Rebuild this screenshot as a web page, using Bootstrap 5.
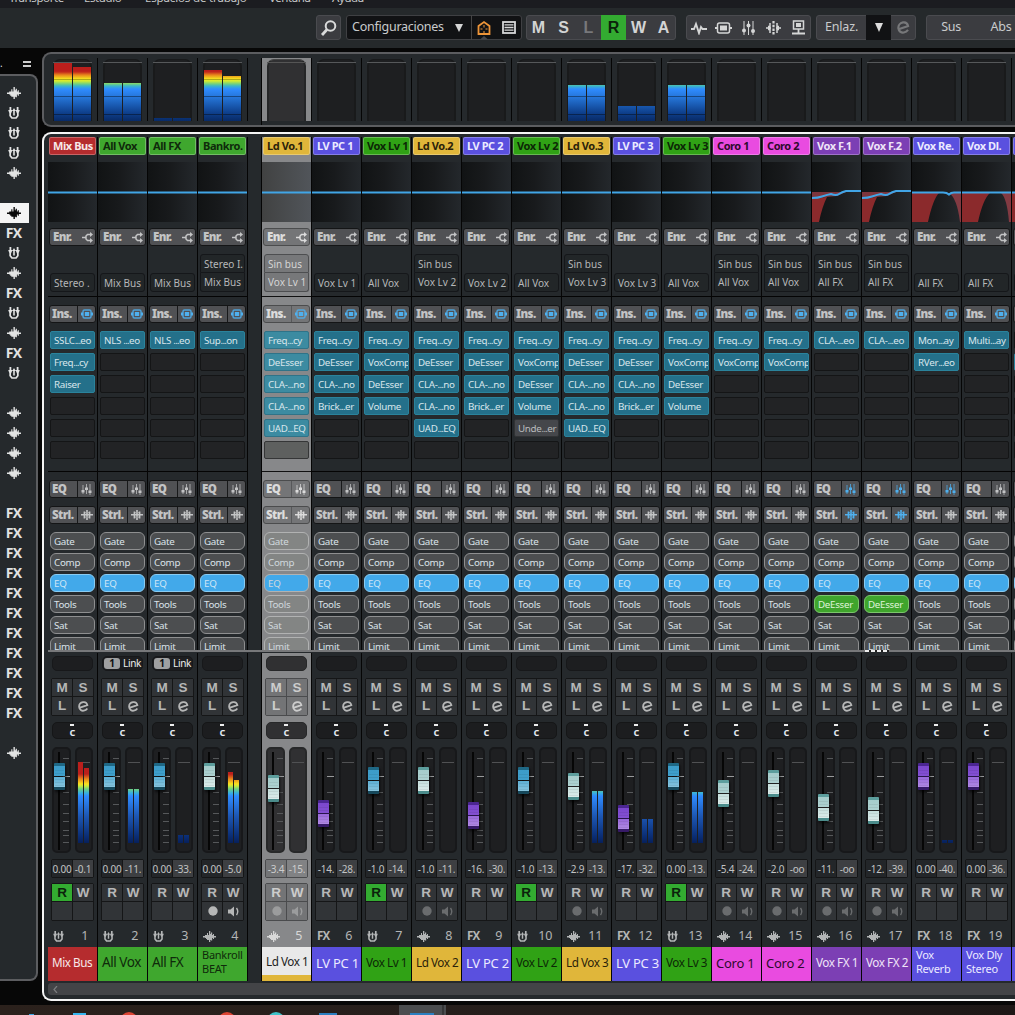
<!DOCTYPE html>
<html lang="es">
<head>
<meta charset="utf-8">
<title>MixConsole</title>
<link href="https://cdn.jsdelivr.net/npm/bootstrap@5.3.0/dist/css/bootstrap.min.css" rel="stylesheet">
<script src="https://cdn.jsdelivr.net/npm/bootstrap@5.3.0/dist/js/bootstrap.bundle.min.js"></script>
<style>
body{width:1015px;height:1015px;overflow:hidden;background:#070707;font-family:"Noto Sans","Open Sans",sans-serif;color:#c9cbcc;font-size:10px;line-height:1;white-space:nowrap}
svg{display:block;flex:none}
.menubar{height:8px;background:#1b1c20;font-size:11.5px;letter-spacing:-.4px;padding-left:9px;color:#c6c7c8}
.menubar span{line-height:16px;margin-top:-10px;flex:none}
.toolbar{height:40px;background:#25292b;padding:7px 0 0 316px;gap:5px}
.tgroup{height:25px;background:#3b3c40;border:1px solid #4a4b4f;border-radius:3px;flex:none}
.tcell{width:25px;height:25px;margin-top:-1px;display:flex;align-items:center;justify-content:center;flex:none}
.tlet .tcell{font:bold 16px "Liberation Sans",sans-serif;color:#d3d4d4}
.tlet .tcell:first-child{margin-left:-1px}
.ticons .tcell:first-child{margin-left:-1px}
.tlet .dim{color:#77787b}
.tlet .on{background:#33ab31;color:#0b230c}
.conf{width:176px;background:#111214;border-color:#3f4043;font-size:12.5px;letter-spacing:-.25px}
.side{width:42px;height:953px}
.sidehead{height:26px;color:#ddd}
.sidebox{width:38px;height:907px;background:#25292c;border:2px solid #5c5d60;border-left:0;border-radius:0 8px 8px 0;padding-top:7px}
.sidebox .si{height:20px;width:29px;display:flex;align-items:center;justify-content:center;color:#e2e3e3;padding-right:2px}
.sidebox .si.cur{background:#f4f4f4;color:#0a0a0a}
.fxt{font:bold 14px/14px "Open Sans","Noto Sans",sans-serif;letter-spacing:-.8px}
.main{width:973px}
.over{height:75px;margin-top:4px;border:2px solid #5c5d60;border-right:0;border-radius:9px 0 0 9px;background:#25292c;padding:4px 0 0 4px}
.ocol{width:50px;height:63px;border-right:1px solid #050505;flex:none;padding-top:1px}
.ocol .slot{width:39px;height:62px;margin-left:5px;background:#1e1f21;border:solid #191a1b;border-width:1px 2px 0;border-radius:7px 7px 0 0;position:relative}
.ocol .slot:before{content:"";position:absolute;left:-2px;right:-2px;top:2px;height:1px;background:#56585a}
.ocol .pair{position:absolute;left:-1px;bottom:0;display:flex;gap:1px;align-items:flex-end}
.ocol i{display:block;width:18px;background:linear-gradient(transparent 16px,#0004 16px 17px,transparent 17px 33px,#0006 33px 34px,transparent 34px 51px,#0006 51px 52px,transparent 52px) bottom/100% 58px no-repeat,linear-gradient(#bb1f1c 8px,#c32a1c 9px,#e8871c 12px,#f5e61e 16px,#d3ec30 18px,#6fcf80 21px,#3cb5c8 23px,#2f8cff 26px,#2370d0 36px,#0e3f8b 50px,#082a66 58px) bottom/100% 58px no-repeat}
.ocol.sel{background:#87888a}.ocol.sel .slot{background:#303032;border-color:#252627;border-top-color:#444}.ocol.sel .slot:before{background:#555}
.gapcol{width:14px;flex:none;border-right:1px solid #050505}
.rack{height:869px;margin-top:5px;border:2px solid #f5f5f5;border-right:0;border-radius:9px 0 0 9px;background:#25292c;padding:3px 0 0 4px}
.chn{width:50px;border-right:1px solid #050505;flex:none;display:flex;flex-direction:column}
.up{height:513px;overflow:hidden}
.lo{height:328px}
.tag{height:18px;margin:0 1px 7px;border:1px solid #fff4;border-radius:2px;padding-left:3px;font:bold 11px/16px "Noto Sans",sans-serif;letter-spacing:-.42px;overflow:hidden;flex:none}
.btnrow{height:18px;margin:0 1px 8px;border:1px solid #141516;border-radius:3px;background:#505154;color:#c3c4c5;display:flex;align-items:center;font:bold 11.5px/16px "Noto Sans",sans-serif;letter-spacing:-.6px;flex:none}
.btnrow b{width:28px;padding-left:2px;height:16px;border-right:1px solid #18191a}
.btnrow.w b{border:0;width:29px;padding-left:3px}
.btnrow svg{margin:0 auto}
.blue{color:#4fb0ee}
.routes{height:38px;margin:0 2px 4px;display:flex;flex-direction:column;justify-content:flex-end;flex:none}
.routes span{height:19px;border:1px solid #15171a;border-radius:3px;background:#222628;line-height:18px;padding-left:3px;font-size:10px;letter-spacing:0;color:#b6b8b9;overflow:hidden}
.routes span+span{border-top:0;border-radius:0 0 3px 3px}
.routes.two span:first-child{border-radius:3px 3px 0 0}
.sepl{height:1px;background:#040404;margin-bottom:8px;flex:none}
.insl{gap:4px;margin:0 2px 12px;display:flex;flex-direction:column;flex:none}
.insl span{height:18px;border:1px solid #141516;border-radius:2px;background:#222325;padding-left:3px;line-height:17px;font-size:9.8px;letter-spacing:-.3px;color:#d8e6ec;overflow:hidden}
.insl u{text-decoration:none;letter-spacing:-.75px}
.insl .fx{background:#24708a;border-color:#2a839c}
.insl .off{background:#45474b;border-color:#303234;color:#b9bbbd}
.mods{gap:3px;margin:0 2px;display:flex;flex-direction:column}
.mods span{height:18px;border:1px solid #8e8f90;border-radius:6px;background:#4c4e50;padding-left:3px;line-height:17px;font-size:9.8px;letter-spacing:-.3px;color:#dbe3ea;flex:none}
.mods .eq{background:#42a9ea;border-color:#8accf2;color:#cfe6f6}
.mods .de{background:#3fa52c;border-color:#7cc76c;color:#dff3d9}
.linkb{height:15px;margin:3px 4px 7px;border:1px solid #17181a;border-radius:5px;background:#1d1e20;color:#eee;font:10px/13px "Noto Sans",sans-serif;display:flex;align-items:center;flex:none;letter-spacing:-.3px}
.linkb b{width:16px;height:11px;line-height:11px;background:#9fa0a1;border-radius:3px;color:#111;text-align:center;margin:0 3px 0 1px}
.quad{height:38px;margin:0 3px;border:1px solid #151617;border-radius:2px;background:#151617;display:grid;grid-template-columns:20px 20px;grid-template-rows:17px 18px;gap:1px;flex:none}
.quad>*{background:#313437;display:flex;align-items:center;justify-content:center;font:bold 13.5px/1 "Liberation Sans",sans-serif;color:#b6b7b7}
.quad svg{margin-left:1px}
.quad .ron{background:#33ab31;color:#0b230c}
.quad .dm{color:#6a6c6e}
.panb{height:17px;margin:6px 4px 8px;border:1px solid #151617;border-radius:5px;background:#1c1d1f;display:flex;flex-direction:column;align-items:center;color:#e4eaf0;font:600 11.5px/12px "Noto Sans",sans-serif;flex:none}
.panb i{width:4px;height:2px;background:#eee;margin-top:1px;flex:none;margin-right:1px}
.panb em{font-style:normal;margin-top:1px;line-height:10px}
.fz{height:106px;margin:0 4px;display:flex;gap:4px;flex:none}
.fz>div{width:19px;height:106px;border:2px solid #17181a;border-radius:5px;background:#1e1f21;position:relative}
.fz .mt{width:18px}
.fz .mt:before{content:"";position:absolute;left:1px;right:1px;top:13px;height:1px;background:#505153}
.fz .mp{position:absolute;left:1px;bottom:8px;display:flex;gap:1px;align-items:flex-end}
.fz .mp i{width:5px;background:linear-gradient(#bb1f1c 12px,#e8871c 17px,#f9e31e 22px,#c6ea40 24px,#6fd080 27px,#38b0dd 31px,#2f8bff 34px,#1d57b4 54px,#0a2c72 75px,#07205a 81px) bottom/100% 81px no-repeat}
.knob{position:absolute;left:0;width:11px;height:27px;border-radius:1px;box-shadow:1px 2px 3px #000a}
.kb{background:linear-gradient(#1f6885 3px,#3c9cc9 3px,#3f9fcb 13px,#111c 13px,#111c 14px,#5eb0d5 14px,#86c4de 24px,#16485b 24px)}
.kw{background:linear-gradient(#5d9e9d 3px,#a5cccb 3px,#add1d0 13px,#222 13px,#222 14px,#c5dfdd 14px,#dcecea 24px,#4b8c8b 24px)}
.kp{background:linear-gradient(#4b2692 3px,#7b47cd 3px,#8350d2 13px,#2a1550 13px,#2a1550 14px,#9868da 14px,#b18ae4 24px,#371a68 24px)}
.knob:after{content:"";position:absolute;inset:5px 1px 4px;background:repeating-linear-gradient(#0000 0 2px,#0001 2px 3px)}
.vals{height:19px;margin:6px 3px 5px;border:1px solid #151617;border-radius:2px;background:#151617;display:grid;grid-template-columns:20px 20px;gap:1px;flex:none;font-size:10px;line-height:18px;letter-spacing:-.25px;color:#c2c3c3}
.vals span{background:#232629;text-align:center;overflow:hidden}
.vals span+span{background:#3d3f42}
.numr{height:26px;padding:4px 9px 0 5px;display:flex;align-items:center;justify-content:space-between;flex:none;font-size:12.5px;letter-spacing:-.3px;color:#b3b5b6}
.numr .fxt{font-size:11.5px;letter-spacing:-.9px}
.nm{height:34px;padding:0 0 2px 4px;display:flex;align-items:center;overflow:hidden;flex:none;font-size:11.7px;letter-spacing:-.45px}
.nm.big{font-size:13.5px;letter-spacing:-.45px}.nm.med{font-size:13px;letter-spacing:-.25px}
.nm.two{font-size:11px;line-height:14px;padding-bottom:4px;letter-spacing:-.25px}
.sel{background:#87888a}
.sel .sepl{background:#111}
.sel .btnrow{background:#747577;border-color:#4b4c4d;color:#dcdcdc}.sel .btnrow b{border-color:#57585a}
.sel .routes span{background:#77787a;border-color:#4d4e50;color:#d5d5d5}
.sel .insl span{background:#5e605f;border-color:#353637}.sel .insl .fx{background:#3c8ba1;border-color:#2f7388}
.sel .mods span{background:#838584;border-color:#b1b2b2;color:#d0d8dd}.sel .mods .eq{background:#42a9ea}
.sel .linkb,.sel .panb,.sel .fz>div{background:#303032;border-color:#272829}
.sel .quad,.sel .vals{background:#4a4b4d;border-color:#4a4b4d}.sel .quad>*,.sel .vals span{background:#737476;color:#ccc}
.sel .quad .dm{color:#9b9c9d}.sel .vals span+span{background:#818284}
.sel .numr{color:#d8d8d8}
.sel .nm{background:#e9e9e9!important;color:#222!important;border-bottom:6px solid #e0b63a;height:34px;padding-bottom:0;padding-top:2px}
.split{height:3px;background:linear-gradient(#77787a 2px,#25292c 2px)}
.grip{width:24px;height:2px;margin-left:817px;background:repeating-linear-gradient(90deg,#eee 0 4px,#222 4px 6px)}
.sbar{height:12px;margin-top:2px;background:#434447;border-radius:3px 0 0 3px;color:#777;padding:3px 0 0 5px}
.task{height:10px;margin-top:4px;background:linear-gradient(90deg,#2b211c,#241d1b 60%,#1d1716)}
</style>
</head>
<body>
<svg width="0" height="0" style="position:absolute">
<defs>
<linearGradient id="gd"><stop offset="0" stop-color="#111314"/><stop offset=".45" stop-color="#181a1c"/><stop offset="1" stop-color="#24282c"/></linearGradient>
<linearGradient id="gs"><stop offset="0" stop-color="#414242"/><stop offset="1" stop-color="#51555a"/></linearGradient>
<symbol id="wave" viewBox="0 0 13 11"><path fill="currentColor" d="M0 5h13v1.500H0zM2 4h1v3H2zM3 4h1v4H3zM4 2h1v7H4zM5 4h1v5H5zM6 0h1.300v11H6zM7 3h1v6H7zM8 1.500h1.200v8H8zM9 4h1v3H9zM10 3h1v5h-1z"/></symbol>
<symbol id="trk" viewBox="0 0 12 12"><path fill="currentColor" d="M1.500 0h1.800v3h1.200L3 6.500v2L4.500 10.200h3L9 8.500v-2L7.500 3h1.200V0h1.800v3h1.300L10.700 6v3l-2.200 2.700h-5L1.300 9V6L.2 3h1.300zM6 1l1.800 3H6.800v4.500H5.200V4h-1z"/></symbol>
<symbol id="rt" viewBox="0 0 11 11"><path fill="none" stroke="currentColor" stroke-width="1.500" d="M0 5.500h4M9 2.500H5.500L4 4v3l1.500 1.500H9"/><path fill="currentColor" d="M8 0l3 2.500-3 2.500zM8 6l3 2.500-3 2.500z"/></symbol>
<symbol id="ins" viewBox="0 0 12 10"><path fill="currentColor" d="M0 3.500h2v3H0zM10 3.500h2v3h-2zM3.800 3h4.400v4H3.800z"/><rect x="2" y="1" width="8" height="8" rx="1.500" fill="none" stroke="currentColor" stroke-width="1.500" opacity=".85"/></symbol>
<symbol id="eqi" viewBox="0 0 11 11"><path fill="currentColor" opacity=".75" d="M1.500 1h1v9h-1zM5 0h1v10H5zM8.500 0h1v11h-1z"/><path fill="currentColor" d="M.5 6h3v2.500h-3zM4 3.500h3V6H4zM7.500 6.500h3V9h-3z"/></symbol>
<symbol id="sti" viewBox="0 0 12 10"><path fill="currentColor" d="M0 4h12v1.600H0zM2.600 1.500h1.600v7H2.600zM7.800 1.500h1.600v7H7.800zM5.200 0h1.600v2.200H5.200zM5.200 2.800h1.600v4H5.200zM5.200 7.500h1.600V10H5.200z"/><path fill="currentColor" opacity=".6" d="M3 2h6v1.200H3zM3 6.500h6v1.200H3z"/></symbol>
<symbol id="ed" viewBox="0 0 12 12"><path fill="none" stroke="currentColor" stroke-width="2" d="M2.200 7.300L10.200 4.600C9.600 1.800 7.300 1 5.500 1.300C2.600 1.800 1 4.200 1.300 6.800C1.600 9.700 4 11 6.300 10.600C8 10.300 9.200 9.500 10.200 8.200"/></symbol>
<symbol id="spk" viewBox="0 0 12 11"><path fill="currentColor" d="M0 3.500h2.500L6 .5v10L2.500 7.500H0z"/><path fill="none" stroke="currentColor" stroke-width="1.400" d="M8.500 2q2.500 3.500 0 7"/></symbol>
</defs></svg>

<div class="menubar d-flex"><span style="width:75px">Transporte</span><span style="width:61px">Estudio</span><span style="width:124px;letter-spacing:-.15px">Espacios de trabajo</span><span style="width:63px">Ventana</span><span>Ayuda</span></div>
<div class="toolbar d-flex">
 <div class="tgroup d-flex align-items-center justify-content-center" style="width:25px"><svg width="16" height="16" viewBox="0 0 16 16" fill="none" stroke="#dadbdb" stroke-width="2"><circle cx="9.500" cy="6" r="4.800"/><path d="M6 9.500L1 15" stroke-width="2.800"/></svg></div>
 <div class="tgroup conf d-flex align-items-center">
  <span style="width:108px;padding-left:5px">Configuraciones</span>
  <svg width="8" height="9"><path d="M0 1h8L4 9z" fill="#d5d5d5"/></svg>
  <svg class="ms-2" width="49" height="25" viewBox="0 0 49 25"><path d="M-1 0h1v25h-1z" fill="#444"/><path d="M-.5 0h1v25" stroke="#444"/><path d="M7.500 19V11L13 7l5.500 4v8z" fill="none" stroke="#ee9538" stroke-width="1.800"/><path d="M13 10v2.500M13 16v2.500M9.500 14h2M14.500 14h2" stroke="#ee9538"/><path d="M9 24.500l4-3.500 4 3.500z" fill="#46474a"/><rect x="32" y="7" width="12" height="11" fill="#111214" stroke="#d6d7d7" stroke-width="1.800"/><path d="M33.500 9.800h9M33.500 12.500h9M33.500 15.200h9" stroke="#d6d7d7" stroke-width="1.300"/></svg>
 </div>
 <div class="tgroup tlet d-flex" style="width:150px;margin-left:-1px"><span class="tcell">M</span><span class="tcell">S</span><span class="tcell dim">L</span><span class="tcell on">R</span><span class="tcell">W</span><span class="tcell">A</span></div>
 <div class="tgroup ticons d-flex" style="width:125px;margin-left:5px;color:#d5d6d6">
  <span class="tcell"><svg width="16" height="14" fill="none" stroke="currentColor" stroke-width="1.900"><path d="M0 8h3l2-5 3 9 2-6 1.500 2H16"/></svg></span>
  <span class="tcell"><svg width="17" height="12" fill="none" stroke="currentColor"><rect x="2.500" y="1" width="12" height="10" rx="2" stroke-width="1.500"/><path d="M0 6h2M15 6h2" stroke-width="2"/><rect x="5" y="3.500" width="7" height="5" fill="currentColor" stroke="none"/></svg></span>
  <span class="tcell"><svg width="13" height="14" fill="currentColor"><path d="M1.500 0h1v14h-1zM6 0h1v14H6zM10.500 0h1v14h-1z"/><circle cx="2" cy="9.500" r="2"/><circle cx="6.500" cy="4.500" r="2"/><circle cx="11" cy="10" r="2"/></svg></span>
  <span class="tcell"><svg width="15" height="14" fill="none" stroke="currentColor" stroke-width="1.500"><path d="M0 7h5M10 7h5M4 2v10M11 2v10M2 5.500h2M2 8.500h2M11 5.500h2M11 8.500h2"/><path d="M7.500 0v14" stroke-width="2.200" stroke-dasharray="2.500 1.200"/></svg></span>
  <span class="tcell"><svg width="13" height="15" fill="none" stroke="currentColor"><rect x="1.500" y="1" width="10" height="8" stroke-width="1.500"/><rect x="4" y="3" width="5" height="4" fill="currentColor" stroke="none"/><path d="M6.500 9v4M0 13.500h4.500M8.500 13.500H13M4 13.500h5" stroke-width="1.800"/></svg></span>
 </div>
 <div class="tgroup d-flex" style="width:100px;font-size:12.5px;letter-spacing:-.15px"><span class="tcell" style="width:49px">Enlaz.</span><span class="tcell" style="background:#111214"><svg width="8" height="9"><path d="M0 0h8L4 9z" fill="#ddd"/></svg></span><span class="tcell" style="color:#77787a"><svg width="13" height="13"><use href="#ed"/></svg></span></div>
 <div class="tgroup d-flex" style="width:120px;margin-left:5px;font-size:12.5px;letter-spacing:-.3px"><span class="tcell" style="width:48px">Sus</span><span class="tcell" style="width:52px">Abs</span></div>
</div>
<div class="d-flex" style="height:953px">
 <div class="side"><div class="sidehead d-flex"><span style="width:23px;padding-top:10px">.</span><svg width="8" height="20"><path d="M0 13h8v2H0zM0 17h8v2H0z" fill="#ccc"/></svg></div><div class="sidebox" id="side"></div></div>
 <div class="main">
  <div class="over d-flex" id="over"></div>
  <div class="rack">
   <div class="d-flex" id="up"></div>
   <div class="split"><div class="grip"></div></div>
   <div class="d-flex" id="lo"></div>
   <div class="sbar"><svg width="5" height="7"><path d="M4 0L1 3.500l3 3.500" fill="none" stroke="#7c7d7f" stroke-width="1.200"/></svg></div>
  </div>
 </div>
</div>
<div class="task"><svg width="1015" height="10"><rect x="399" width="47" height="10" fill="#4b4d4f"/><path d="M443 0v10" stroke="#222"/><path d="M73 8h13v2H73z" fill="#35b5ee"/><circle cx="129" cy="16" r="9" fill="#dc4433"/><circle cx="227" cy="16" r="9" fill="#dc4433"/><circle cx="276" cy="16" r="9" fill="#3fc3c9"/><path d="M319 8h18v2h-18zM410 8h24v2h-24z" fill="#2b7fc0"/><path d="M29 9h5v1h-5z" fill="#3aa5e5"/></svg></div>
<script>
const C={red:['#b52c2e','#f7e9e9'],gr:['#3fa72e','#0f2a0b'],ye:['#e0b63a','#2b220a'],bl:['#5a50df','#eceaff'],gv:['#30a215','#0c2706'],pk:['#e94be0','#2e0a2c'],vi:['#7c3fb4','#efe4f8']};
const F='Freq...cy',D='DeEsser',L='CLA-...no',B='Brick...er',V='VoxComp',U='UAD...EQ',O='Volume';
// tag, colour, input, output, inserts, EQ curve, fader centre, knob, meter tops, overview tops, values, R on, record state, icon, name, name size
const ch=[
['Mix Bus','red','','Stereo .',['SSLC...eo',F,'Raiser'],0,776,'b',[762,768],[63,67],['0.00','-0.1'],1,0,'t','Mix Bus',''],
['All Vox','gr','','Mix Bus',['NLS ...eo'],0,776,'b',[789,789],[83,83],['0.00','-11.'],0,0,'t','All Vox','big'],
['All FX','gr','','Mix Bus',['NLS ...eo'],0,776,'b',[835,835],[118,118],['0.00','-33.'],0,0,'t','All FX','big'],
['Bankro.','gr','Stereo I.','Mix Bus',['Sup...on'],0,776,'w',[772,780],[70,76],['0.00','-5.0'],0,2,'w','Bankroll<br>BEAT','two'],
['Ld Vo.1','ye','Sin bus','Vox Lv 1',[F,D,L,L,U],0,788,'w',0,0,['-3.4','-15.'],0,1,'w','Ld Vox 1',''],
['LV PC 1','bl','','Vox Lv 1',[F,D,L,B],0,813,'p',0,0,['-14.','-28.'],0,0,'f','LV PC 1','med'],
['Vox Lv 1','gv','','All Vox',[F,V,D,O],0,780,'b',0,0,['-1.0','-14.'],1,0,'t','Vox Lv 1',''],
['Ld Vo.2','ye','Sin bus','Vox Lv 2',[F,D,L,L,U],0,780,'w',0,0,['-1.0','-11.'],0,1,'w','Ld Vox 2',''],
['LV PC 2','bl','','Vox Lv 2',[F,D,L,B],0,815,'p',0,0,['-16.','-30.'],0,0,'f','LV PC 2','med'],
['Vox Lv 2','gv','','All Vox',[F,V,D,O,'Unde...er'],0,780,'b',0,0,['-1.0','-13.'],1,0,'t','Vox Lv 2',''],
['Ld Vo.3','ye','Sin bus','Vox Lv 3',[F,D,L,L,U],0,786,'w',[791,791],[85,85],['-2.9','-13.'],0,1,'w','Ld Vox 3',''],
['LV PC 3','bl','','Vox Lv 3',[F,D,L,B],0,818,'p',[819,819],[106,106],['-17.','-32.'],0,0,'f','LV PC 3','med'],
['Vox Lv 3','gv','','All Vox',[F,V,D,O],0,776,'b',[792,792],[85,85],['0.00','-13.'],1,0,'t','Vox Lv 3',''],
['Coro 1','pk','Sin bus','All Vox',[F,V],0,793,'w',0,0,['-5.4','-24.'],0,1,'w','Coro 1','med'],
['Coro 2','pk','Sin bus','All Vox',[F,V],0,783,'w',0,0,['-2.0','-oo'],0,1,'w','Coro 2','med'],
['Vox F.1','vi','Sin bus','All FX',['CLA-...eo'],1,807,'w',0,0,['-11.','-oo'],0,1,'w','Vox FX 1',''],
['Vox F.2','vi','Sin bus','All FX',['CLA-...eo'],1,810,'w',0,0,['-12.','-39.'],0,1,'w','Vox FX 2',''],
['Vox Re.','bl','','All FX',['Mon...ay','RVer...eo'],2,776,'p',[840,840],0,['0.00','-40.'],0,0,'f','Vox<br>Reverb','two'],
['Vox Dl.','bl','','All FX',['Multi...ay'],3,776,'p',0,0,['0.00','-36.'],0,0,'f','Vox Dly<br>Stereo','two'],
['','bl','','',[' ',' '],3,776,'p',0,0,['',''],0,0,'','','']];
const ic=(n,w,h,c='')=>`<svg class="${c}" width="${w}" height="${h}"><use href="#${n}"/></svg>`;
const curves=[
 '<path d="M0 30.500h49" class="ln"/>',
 '<path d="M0 30h34L25 34 14 35 0 36z" fill="#7c353c"/><path d="M0 36l15-1Q10 45 7 60H0z" fill="#8b2a2c"/><path d="M0 36q6 0 10-1.500t9-2.500q5 2 8 0t7-3h15" class="ln"/>',
 '<path d="M0 31h27Q21 37 16 60H0z" fill="#8b2a2c"/><path d="M37 31h12v29h-1Q45 36 37 31z" fill="#823a42"/><path d="M0 30.500h31q4 0 6 2 2-2 5-2h7" class="ln"/>',
 '<path d="M0 31h28Q21 37 16 60H0z" fill="#8b2a2c"/><path d="M39 31h10v29h-2Q45 36 39 31z" fill="#823a42"/><path d="M0 30.500h49" class="ln"/>'];
const curve=(k,s)=>`<svg width="49" height="60" style="margin-bottom:6px"><rect width="49" height="60" fill="url(#${s?'gs':'gd'})"/><g fill="none">${curves[k].replace(/class="ln"/g,'stroke="#41a5e6" stroke-width="2"')}</g></svg>`;
const hb=(t,i)=>`<div class="btnrow"><b>${t}</b>${i}</div>`;
let ov='',up='',lo='';
ch.forEach((c,i)=>{
 const s=i==4?' sel':'',[bg,fg]=C[c[1]],last=i==19;
 if(i==4){const g='<div class="gapcol"></div>';ov+=g;up+=g;lo+=g}
 ov+=`<div class="ocol${s}"><div class="slot">${c[9]?`<div class="pair">${c[9].map(v=>`<i style="height:${121-v}px"></i>`).join('')}</div>`:''}</div></div>`;
 const ins=[0,1,2,3,4,5].map(n=>{const t=c[4][n];return `<span class="${t?(t[0]=='U'&&t[1]=='n'?'off':(last&&n==0?'':'fx')):''}">${(t||'').replace('...','<u>...</u>')}</span>`}).join('');
 up+=`<div class="chn up${s}"><div class="tag" style="background:${bg};color:${fg}">${c[0]}</div>${curve(c[5],s)}
 <div class="btnrow w"><b>Enr.</b>${ic('rt',11,11)}</div>
 <div class="routes ${c[2]?'two':''}">${c[2]?`<span>${c[2]}</span>`:''}<span>${c[3]}</span></div><div class="sepl"></div>
 ${hb('Ins.',ic('ins',12,10,'blue'))}<div class="insl">${ins}</div><div class="sepl"></div>
 ${hb('EQ',ic('eqi',11,11,i>14&&i<18?'blue':''))}${hb('Stri.',ic('sti',12,10,i==15||i==16?'blue':''))}
 <div class="mods"><span>Gate</span><span>Comp</span><span class="eq">EQ</span><span class="${i==15||i==16?'de':''}">${i==15||i==16?'DeEsser':'Tools'}</span><span>Sat</span><span>Limit</span></div></div>`;
 const rec=c[12],dm=rec==1?'dm':'';
 const icon={t:ic('trk',11,11),w:ic('wave',13,11),f:'<span class="fxt">FX</span>','':''}[c[13]];
 lo+=`<div class="chn lo${s}"><div class="linkb">${i==1||i==2?'<b>1</b>Link':''}</div>
 <div class="quad"><span>M</span><span>S</span><span>L</span><span>${ic('ed',11,11)}</span></div>
 <div class="panb"><i></i><em>c</em></div>
 <div class="fz"><div><svg width="19" height="102"><path d="M5 3v98" stroke="#060606" stroke-width="2"/><path d="M9 9.500h6M9 43.500h6M9 55.500h6M9 64.500h6M9 72.500h6M9 81.500h6M9 86.500h6M9 93.500h6" stroke="#56585a"/><path d="M9 27.500h7" stroke="#97999a"/></svg><div class="knob k${c[7]}" style="top:${c[6]-762}px"></div></div>
 <div class="mt">${c[8]?`<div class="mp">${c[8].map(v=>`<i style="height:${843-v}px"></i>`).join('')}</div>`:''}</div></div>
 <div class="vals"><span>${c[10][0]}</span><span>${c[10][1]}</span></div>
 <div class="quad"><span class="${c[11]?'ron':''}">R</span><span>W</span><span class="${dm}">${rec?'<svg width="10" height="10"><circle cx="5" cy="5" r="4.700" fill="currentColor"/></svg>':''}</span><span class="${dm}">${rec?ic('spk',12,11):''}</span></div>
 <div class="numr">${icon}<span>${last?'':i+1}</span></div>
 <div class="nm ${c[15]}" style="background:${bg};color:${fg}"><span>${c[14]}</span></div></div>`;
});
document.getElementById('over').innerHTML=ov;
document.getElementById('up').innerHTML=up;
document.getElementById('lo').innerHTML=lo;
document.querySelectorAll('#over,#up,#lo').forEach(e=>e.style.overflow='hidden');
document.getElementById('side').innerHTML=[...'wtttw cftwftwft wwww fffffffffff w'].map((k,n)=>`<div class="si ${k=='c'?'cur':''}">${k=='w'||k=='c'?ic('wave',14,12):k=='t'?ic('trk',12,12):k=='f'?'<span class="fxt">FX</span>':''}</div>`).join('');
</script>
</body>
</html>
